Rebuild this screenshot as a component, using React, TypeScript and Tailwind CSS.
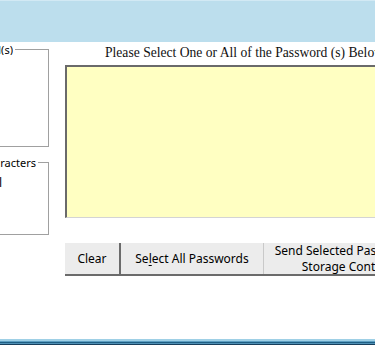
import React from "react";

const ui = "font-['Segoe_UI','Noto_Sans','Open_Sans',sans-serif]";

function GroupBox({ label, lineWidth, height, children }: { label: string; lineWidth: string; height: string; children?: React.ReactNode }) {
  return (
    <div className={`flex flex-col ${height}`}>
      <div className="flex h-[11px] items-start">
        <div className="flex min-w-0 flex-1 justify-end overflow-hidden">
          <span className="whitespace-nowrap text-[11px] leading-[11px] text-black">{label}</span>
        </div>
        <div className={`${lineWidth} mt-[5px] ml-[2px] h-[6px] shrink-0 border-t border-r border-[#a0a0a0]`} />
      </div>
      <div className="flex-1 border-r border-b border-[#a0a0a0]">{children}</div>
    </div>
  );
}

export default function App() {
  return (
    <div className={`flex h-[345px] w-[375px] flex-col overflow-hidden bg-white ${ui}`}>
      {/* title bar */}
      <div className="h-[42px] shrink-0 border-t border-[#d2e9f4] bg-[#bcdeed]" />

      <div className="flex flex-1 pt-[2px]">
        {/* left group boxes, clipped */}
        <div className="flex w-[49px] shrink-0 flex-col gap-[10px] overflow-hidden">
          <GroupBox label="Number of Password(s)" lineWidth="w-[34px]" height="h-[103px]" />
          <GroupBox label="Special Characters" lineWidth="w-[11px]" height="h-[78px]">
            <div className="flex justify-end overflow-hidden pt-[8px] pr-[46px]">
              <span className="whitespace-nowrap text-[12px] leading-[14px]">Total</span>
            </div>
          </GroupBox>
        </div>

        {/* right side */}
        <div className="ml-[16px] flex min-w-0 flex-1 flex-col">
          <div className="h-[21px] whitespace-nowrap pl-[40px] font-['Liberation_Serif',serif] text-[13.6px] leading-[18px] text-[#111]">
            Please Select One or All of the Password (s) Below
          </div>
          <div className="h-[153px] w-[340px] shrink-0 border-t-2 border-l-2 border-b border-t-[#6a6a6a] border-l-[#6a6a6a] border-b-[#d4d4d4] bg-[#ffffc2]" />

          <div className="mt-[25px] flex h-[33px] w-[380px] shrink-0 border-b-2 border-[#6b6b6b]">
            <button className="w-[56px] shrink-0 border-r-2 border-[#6b6b6b] bg-[#ececec] text-[12px] text-black">Clear</button>
            <button className="w-[143px] shrink-0 border-r border-[#c9c9c9] bg-[#ececec] text-[12px] text-black">
              Se<span className="underline underline-offset-2">l</span>ect All Passwords
            </button>
            <button className="w-[178px] shrink-0 bg-[#ececec] text-[12px] leading-[16px] text-black">
              Send Selected Passwords to
              <br />
              Storage Container
            </button>
          </div>
        </div>
      </div>

      {/* bottom border */}
      <div className="flex shrink-0 flex-col">
        <div className="h-[2px] bg-[#9fd0e6]" />
        <div className="h-px bg-[#5d9fc2]" />
        <div className="h-px bg-[#1e5e84]" />
        <div className="h-px bg-[#4f91b6]" />
        <div className="h-px bg-[#183f5c]" />
      </div>
    </div>
  );
}
